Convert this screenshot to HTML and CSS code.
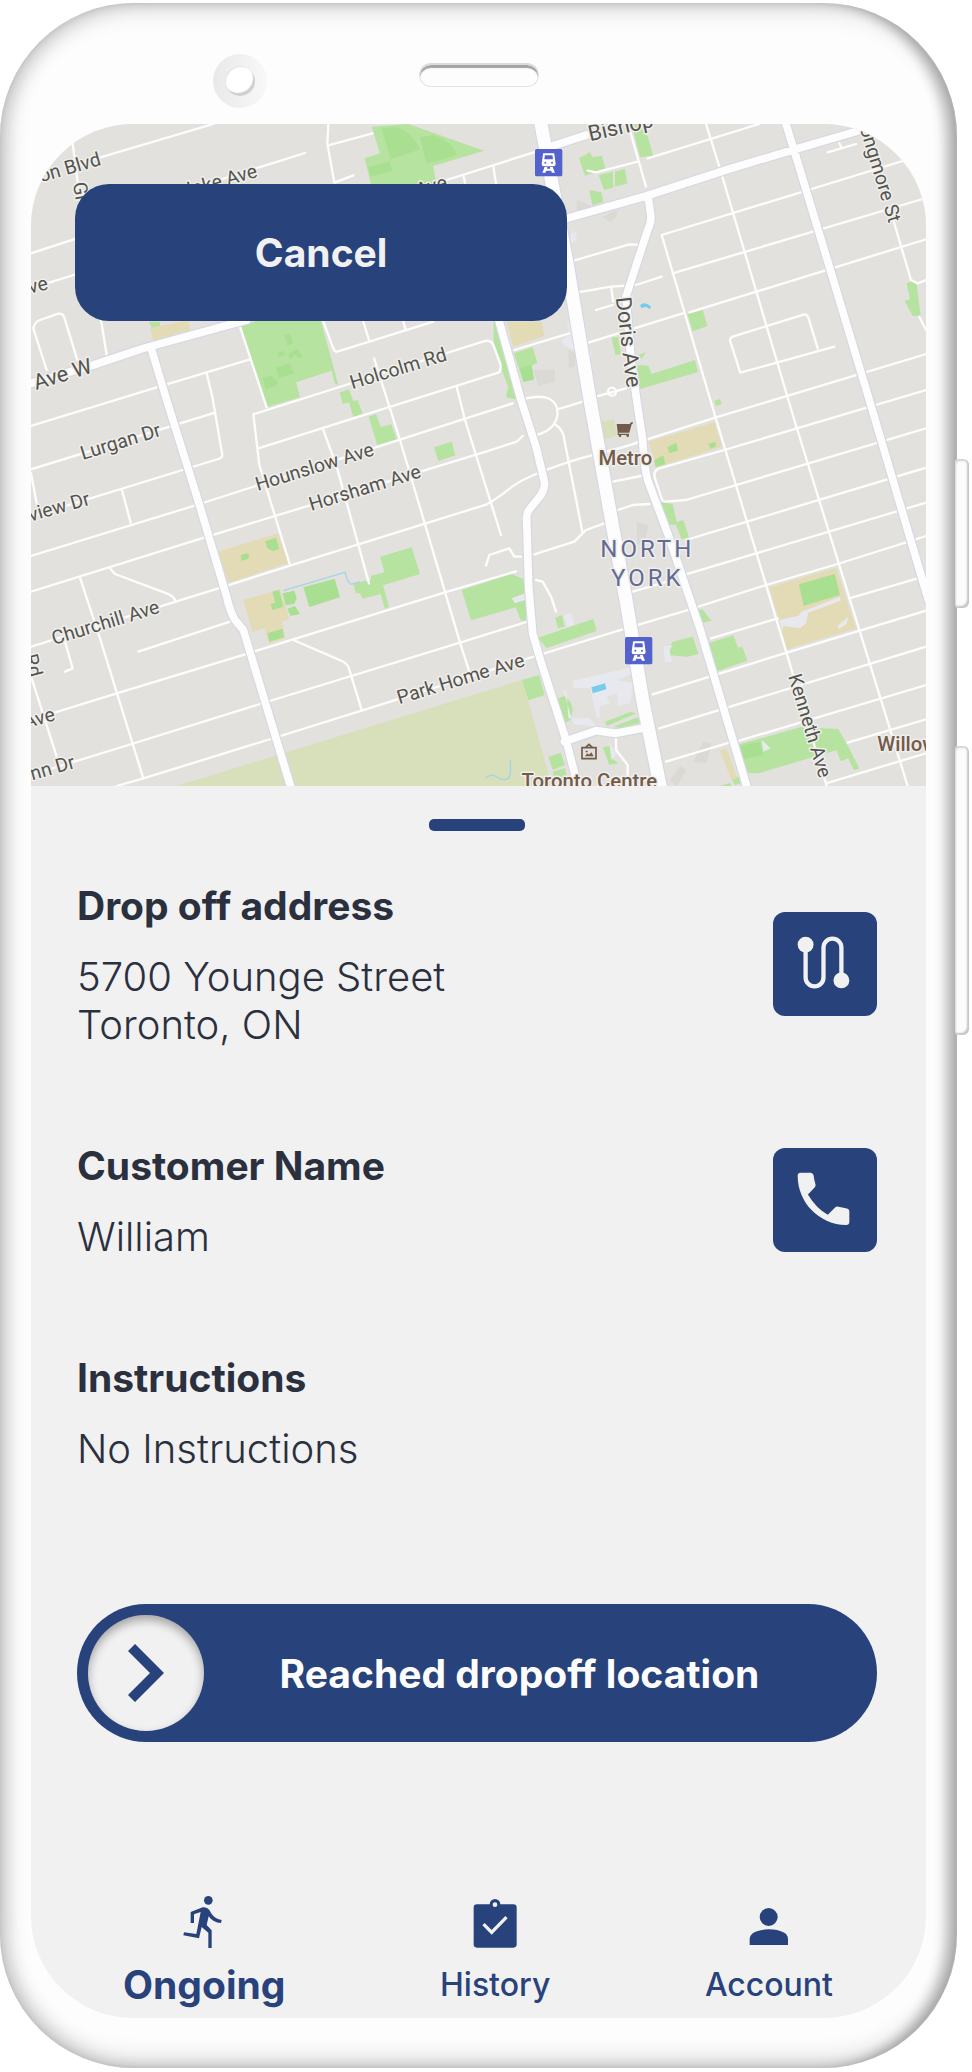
FILE: index.html
```html
<!DOCTYPE html>
<html lang="en">
<head>
<meta charset="utf-8">
<meta name="viewport" content="width=device-width, initial-scale=1">
<title>Drop off</title>
<link rel="stylesheet" href="styles.css">
</head>
<body>
<div class="device">
  <span class="side-key side-key-power"></span>
  <span class="side-key side-key-volume"></span>
  <div class="bezel">
    <span class="camera"><span class="lens"></span></span>
    <span class="speaker"></span>
  </div>
  <main class="screen">
    <section class="map-area">
      <svg class="map" viewBox="93 372 2685 1986" preserveAspectRatio="xMidYMid slice" role="img" aria-label="Map of North York">
        <rect class="land" x="93" y="372" width="2685" height="1986"/>
        <!-- parks and school grounds -->
        <g class="olive">
          <path d="M530 2358L1458 2073L1567 2040L1655 2358Z"/>
          <path d="M1805 1265L1843 1257L1850 1308L1812 1318Z"/>
        </g>
        <g class="park">
          <path d="M1115 380L1225 372L1452 452L1300 498L1310 560L1115 560L1094 475L1140 460Z"/>
          <path d="M722 978L780 960H962L1015 1155L1004 1150L995 1112L888 1147L900 1192L800 1222Z"/>
          <path d="M1019 1178L1047 1168L1060 1203L1073 1200L1088 1241L1060 1250L1047 1207L1028 1212Z"/>
          <path d="M1106 1250L1128 1243L1142 1281L1174 1273L1190 1318L1132 1335Z"/>
          <path d="M1302 1342L1355 1325L1366 1366L1315 1383Z"/>
          <path d="M1141 1670L1235 1642L1260 1722L1149 1756L1167 1820L1155 1826L1142 1782L1088 1796L1080 1780L1068 1780L1059 1750L1113 1740L1113 1728L1153 1717Z"/>
          <path d="M1385 1770L1535 1722L1577 1740L1578 1862L1563 1862L1547 1822L1413 1861Z"/>
          <path d="M448 965H480V977L455 984Z"/>
          <path d="M1737 475L1770 457L1778 472L1805 467L1817 505L1755 527Z"/>
          <path d="M1796 525L1838 515L1840 563L1812 570ZM1845 515L1875 506L1882 550L1845 560Z"/>
          <path d="M1768 570L1804 577L1810 606L1777 616Z"/>
          <path d="M1895 372H1932L1960 467L1920 472Z"/>
          <path d="M2062 942L2108 930L2122 978L2078 994Z"/>
          <path d="M1910 1095L1945 1097L1955 1122L2085 1080L2094 1116L1918 1168Z"/>
          <path d="M1834 1012L1855 1012L1863 1062L1847 1066Z"/>
          <path d="M1906 1068L1938 1057L1925 1076Z"/>
          <path d="M1542 1060L1598 1042L1612 1088L1592 1098L1600 1140L1570 1146Z"/>
          <path d="M1480 965H1500L1547 1198L1518 1192L1525 1160L1482 1050Z"/>
          <path d="M2143 1202L2160 1197L2165 1212L2148 1218Z"/>
          <path d="M2720 850L2735 843L2750 853L2762 948H2738L2714 902L2730 898Z"/>
          <path d="M1978 1505L2018 1512L2030 1567L2050 1560L2067 1612L2045 1618L2028 1574L1998 1575Z"/>
          <path d="M2085 1830L2107 1828L2134 1862L2100 1870Z"/>
          <path d="M2010 1938L2018 1925L2078 1910L2096 1962L2062 1970L2010 1966Z"/>
          <path d="M2125 1930L2200 1906L2214 1943L2227 1940L2242 1982L2152 2013Z"/>
          <path d="M1614 1913L1780 1857L1790 1893L1640 1944ZM1666 1853L1686 1845L1694 1880L1674 1885Z"/>
          <path d="M1566 2040L1617 2025L1634 2085L1585 2101Z"/>
          <path d="M1673 2095L1693 2088Q1715 2100 1718 2130L1712 2160L1692 2170Z"/>
          <path d="M1815 2165L1890 2136L1910 2140L1820 2178ZM1840 2180L1912 2152L1920 2168L1860 2184Z"/>
          <path d="M1808 2242L1828 2238L1835 2275L1855 2290L1828 2295Z"/>
          <path d="M1645 2270L1683 2258L1694 2295L1658 2310ZM1658 2315L1695 2305L1700 2330L1665 2340Z"/>
          <path d="M2210 2235L2400 2182L2470 2205L2512 2188L2555 2288L2578 2305L2562 2310L2545 2275L2522 2283L2510 2250L2275 2320L2240 2318Z"/>
          <path d="M2400 2182L2515 2187L2545 2240L2578 2305L2562 2310L2545 2275L2522 2283L2510 2250L2430 2272Z"/>
          <path d="M2160 2358L2190 2348L2195 2358ZM2195 2338L2215 2330L2222 2350L2205 2355Z"/>
        </g>
        <g class="tan">
          <path d="M450 984L565 960L570 990L460 1022Z"/>
          <path d="M655 1655L834 1600L864 1690L685 1748Z"/>
          <path d="M730 1800L840 1768L868 1858L845 1865L855 1915L808 1930L795 1885L758 1895Z"/>
          <path d="M1520 965H1625L1633 1008L1540 1040Z"/>
          <path d="M1945 1325L2143 1267L2166 1340L1970 1402Z"/>
          <path d="M2308 1762L2508 1703L2568 1885L2362 1948Z"/>
          <path d="M2158 2250L2180 2246L2212 2335L2195 2340Z"/>
        </g>
        <g class="field">
          <path d="M1145 385L1190 380Q1240 400 1260 448L1172 478ZM1260 412L1300 405Q1350 420 1372 465L1280 492ZM1105 500L1168 485L1178 512L1112 530Z"/>
          <path d="M853 1005L870 1000L880 1030L862 1036ZM832 1060L850 1052L856 1065L838 1072ZM865 1065L890 1046L909 1070L895 1074L885 1062L872 1076ZM828 1103L870 1090L882 1120L838 1133ZM788 1135L812 1126L834 1148L825 1160L797 1168Z"/>
          <path d="M795 1624L828 1613L838 1646L820 1654L802 1645ZM723 1666L738 1660L748 1663L745 1676L724 1683Z"/>
          <path d="M817 1775L837 1770L850 1820L817 1830L812 1812L826 1808Z"/>
          <path d="M848 1780L883 1772L890 1795L883 1812L857 1816ZM862 1826L885 1818L900 1842L872 1848ZM910 1762L1004 1736L1020 1792L928 1821ZM802 1900L848 1886L852 1912L808 1925Z"/>
          <path d="M2397 1753L2504 1722L2520 1785L2411 1817ZM1963 1380L1990 1366L1996 1393L1967 1401ZM2002 1342L2030 1328L2033 1352L2008 1360ZM2125 1332L2145 1326L2150 1338L2132 1346ZM2220 2238L2278 2225L2290 2265L2230 2278ZM1560 1105L1595 1095L1602 1138L1570 1145Z"/>
        </g>
        <g class="building">
          <path d="M2338 1860L2395 1848L2405 1835L2520 1790L2522 1802L2425 1838L2418 1870L2400 1885L2350 1878L2347 1892ZM2512 1878L2545 1850L2540 1872L2516 1888Z"/>
          <path d="M1718 2042L1900 2000V2020L1850 2040L1900 2050L1890 2110L1855 2118L1850 2080L1820 2090L1830 2110L1798 2120L1800 2155L1790 2150L1770 2065L1722 2065ZM1690 2070L1700 2072L1705 2155L1770 2155L1790 2180L1720 2172Z"/>
          <path d="M1690 1845L1715 1840L1722 1875L1702 1880ZM1990 1940L2018 1935L2008 1952L2018 1985L1995 1986ZM1535 1795L1575 1780V1800L1545 1810ZM1828 2228L1850 2260L1835 2280ZM1685 1020L1710 1005L1700 960L1730 1000L1775 1060L1770 1115L1740 1060L1690 1035ZM1712 700L1730 695L1728 720L1712 730ZM2285 2220L2312 2245L2290 2255Z"/>
        </g>
        <g class="shade">
          <path d="M1705 1050L1728 1060L1723 1100L1706 1104ZM1600 1110H1665L1665 1145L1615 1158ZM1910 1565L1945 1575L1935 1625L1912 1635ZM2080 2285L2110 2225L2135 2230L2120 2290ZM2010 2340L2040 2298L2060 2310L2030 2358ZM1730 600L1780 620L1730 635ZM1808 650L1850 630L1850 650L1830 665Z"/>
        </g>
        <path class="creek" d="M850 1772L1035 1717L1042 1740L1052 1753L1080 1746M1458 2335Q1470 2320 1485 2328Q1510 2345 1525 2335Q1535 2325 1530 2278"/>
        <path class="water" d="M1774 2062L1815 2050L1819 2068L1778 2080ZM1920 915Q1935 903 1953 920L1950 928L1938 920L1925 925Z"/>
        <!-- local streets -->
        <g class="street">
          <path d="M200 502L640 372M620 552L915 459M985 372L982 430L1003 548L1060 526M985 436L1118 400M218 430L240 600M93 760L240 712M93 865L240 819"/>
          <path d="M140 1110L100 985Q105 965 120 960L175 941Q188 940 192 950L232 1080M303 960L320 1065M93 1278L470 1162L750 1078M620 1120L637 1190L667 1365Q668 1373 655 1377L93 1550M93 1408L645 1238M93 1420L110 1510M365 1467L392 1568"/>
          <path d="M93 1668L580 1518L1538 1210M93 1775L605 1615L1458 1355L1550 1325L1568 1308M93 1940L655 1765L870 1697L1458 1514Q1500 1490 1530 1465T1638 1410T1798 1360T1913 1327L2148 1252L2778 1062"/>
          <path d="M415 1955L690 1865M93 2160L350 2080L735 1963L1335 1777L1548 1714M93 2325L395 2232L780 2112L1380 1928L1588 1863M350 2358L430 2335L812 2217L1085 2132L1568 1980L1868 1888L2058 1832L2298 1755L2513 1692L2778 1608"/>
          <path d="M240 1733L300 1915L430 2335M330 1705L345 1722L500 1780Q520 1788 525 1800M195 1925L218 2005L195 2015M95 2035L170 2270M880 1920L1030 1985Q1042 1992 1045 2000L1085 2130"/>
          <path d="M720 980L800 1222M870 1695L778 1395L760 1243L1458 1022Q1475 1022 1480 1035L1502 1095Q1503 1112 1495 1118L775 1345M970 1290L1010 1400L1107 1750M1122 1075L1200 1320L1380 1928L1407 2012M1370 1160L1395 1260L1503 1605M970 965L1000 1045Q1003 1055 1012 1055L1300 965M1090 965L1107 1020M1210 965L1217 990"/>
          <path d="M1340 540L1608 455M1390 525L1395 548M1480 500L1488 550M1888 385L1938 560M2118 372L2158 500L2383 1260L2723 2358M1943 475L2278 372M1763 512L1788 517L1913 485"/>
          <path d="M1985 705L2148 1257L2378 2020L2480 2358M1985 705L2708 483M2018 820L2768 597M2068 937L2778 718M1758 1030L2048 940M2453 1045L2426 955Q2422 942 2413 943L2198 1010Q2188 1015 2191 1025L2221 1118L2503 1040"/>
          <path d="M2778 1170L2173 1350L1978 1405Q1958 1412 1965 1435L1983 1490Q1985 1505 1998 1505L2058 1500L2778 1285M2778 1403L2058 1620M2778 1508L2058 1723L2038 1680M2753 1735L2548 1795M2778 1832L2363 1957L1958 2083M2133 1915L2333 1855M2778 1940L1978 2185M2778 2055L2208 2225L2123 1930M2778 2158L2543 2228M2778 2260L2478 2350M1998 2285L2208 2222"/>
          <path d="M2680 660L2733 840L2753 850L2778 840M2758 950L2778 990M2483 457L2568 432M2518 430L2523 440M1718 783L1888 733L1918 735M1733 877L1833 860L1908 855L1985 830M1833 860L1840 905M1788 930L1838 915M1543 1050L1708 1000M1578 1195Q1670 1175 1673 1240Q1668 1290 1608 1305M1673 1228L1748 1205M1788 1190L1878 1165M1668 1275Q1690 1290 1693 1320L1748 1600M1838 1445L1923 1428M1853 1530L1898 1515L1948 1512M1603 1663L1723 1625L1758 1590L1813 1570M1458 1697L1468 1665L1528 1645L1543 1670L1563 1670M1608 1740L1628 1745L1653 1790L1668 1835M1898 1775L2018 1740M1848 2200V2250L1883 2295V2358"/>
          <circle cx="1836" cy="1175" r="12"/>
        </g>
        <!-- arterial roads, casing below fill -->
        <g class="casing">
          <path d="M93 1150L280 1095L430 1045L740 960M455 1050L500 1200L600 1520L680 1790Q690 1835 705 1860L730 1890L872 2360M1660 437L1760 405M1690 658L1938 588L2178 510L2378 450L2590 388M2358 372L2388 470L2488 800L2608 1200L2785 1800M1945 595L1953 650Q1953 670 1943 690L1878 890L1893 1080L1910 1200L1928 1320Q1932 1400 1943 1440L2003 1600L2098 1880L2178 2150L2245 2375M1498 965L1563 1200L1608 1340L1632 1440Q1638 1460 1623 1485L1588 1528Q1578 1540 1580 1560L1586 1760L1598 1900L1618 1970L1698 2220L1738 2375M1693 2225L1788 2192L1848 2200L1928 2185"/>
          <path class="wide" d="M1623 372L1658 560L1703 800L1770 1200L1838 1580L1878 1800L1928 2100L1985 2380"/>
        </g>
        <g class="arterial">
          <path d="M93 1150L280 1095L430 1045L740 960M455 1050L500 1200L600 1520L680 1790Q690 1835 705 1860L730 1890L872 2360M1660 437L1760 405M1690 658L1938 588L2178 510L2378 450L2590 388M2358 372L2388 470L2488 800L2608 1200L2785 1800M1945 595L1953 650Q1953 670 1943 690L1878 890L1893 1080L1910 1200L1928 1320Q1932 1400 1943 1440L2003 1600L2098 1880L2178 2150L2245 2375M1498 965L1563 1200L1608 1340L1632 1440Q1638 1460 1623 1485L1588 1528Q1578 1540 1580 1560L1586 1760L1598 1900L1618 1970L1698 2220L1738 2375M1693 2225L1788 2192L1848 2200L1928 2185"/>
          <path class="wide" d="M1623 372L1658 560L1703 800L1770 1200L1838 1580L1878 1800L1928 2100L1985 2380"/>
        </g>
        <!-- street names -->
        <g class="street-name">
          <text transform="translate(123 547) rotate(-16)">on Blvd</text>
          <text transform="translate(775 530) rotate(-16)" text-anchor="end">lake Ave</text>
          <text transform="translate(1345 564) rotate(-16)" text-anchor="end">Ave</text>
          <text transform="translate(147 867) rotate(-14)" text-anchor="end">ve</text>
          <text class="big" transform="translate(280 1117) rotate(-17)" text-anchor="end">n Ave W</text>
          <text transform="translate(218 550) rotate(80)">Gr</text>
          <text transform="translate(1057 1168) rotate(-17)">Holcolm Rd</text>
          <text transform="translate(248 1380) rotate(-17)">Lurgan Dr</text>
          <text transform="translate(273 1513) rotate(-16)" text-anchor="end">view Dr</text>
          <text transform="translate(773 1473) rotate(-17)">Hounslow Ave</text>
          <text transform="translate(934 1533) rotate(-17)">Horsham Ave</text>
          <text transform="translate(162 1935) rotate(-17)">Churchill Ave</text>
          <text transform="translate(168 2160) rotate(-16)" text-anchor="end">Ave</text>
          <text transform="translate(228 2303) rotate(-16)" text-anchor="end">nn Dr</text>
          <text transform="translate(72 1968) rotate(75)">Rd</text>
          <text transform="translate(1198 2113) rotate(-17)">Park Home Ave</text>
          <text class="big" transform="translate(1770 424) rotate(-13)">Bishop</text>
          <text class="big" transform="translate(1847 893) rotate(83)">Doris Ave</text>
          <text transform="translate(2570 355) rotate(73)">Longmore St</text>
          <text transform="translate(2364 2029) rotate(73)">Kenneth Ave</text>
        </g>
        <g class="district">
          <text x="1942" y="1670" text-anchor="middle">NORTH</text>
          <text x="1942" y="1757" text-anchor="middle">YORK</text>
        </g>
        <g class="place">
          <text x="1876" y="1395" text-anchor="middle">Metro</text>
          <text x="1768" y="2363" text-anchor="middle">Toronto Centre</text>
          <text x="2632" y="2253">Willow</text>
        </g>
        <!-- shopping cart -->
        <path class="poi" d="M1850 1272H1889L1893 1267H1899V1270L1895 1273L1888 1298H1856V1301H1887V1305H1853V1296Z"/>
        <circle class="poi" cx="1860" cy="1307" r="4"/><circle class="poi" cx="1883" cy="1307" r="4"/>
        <!-- gallery bag -->
        <path class="poi-line" d="M1746 2243H1788V2276H1746ZM1757 2242L1767 2233L1777 2242"/>
        <path class="poi" d="M1755 2269L1762 2260L1767 2264L1774 2257L1781 2269ZM1757 2252h6v5h-6z"/>
        <!-- subway stations -->
        <g id="station">
          <rect class="station-box" x="1605" y="447" width="82" height="82" rx="5"/>
          <path class="station-line" d="M1632 463H1660L1664 492Q1664 496 1660 496H1632Q1628 496 1628 492Z"/>
          <path class="station-fill" d="M1628 478H1664V497H1628ZM1634 501H1642L1641 506H1651L1650 501H1658L1665 518H1656L1653 512H1639L1636 518H1627Z"/>
          <circle class="station-dot" cx="1636" cy="488" r="3"/><circle class="station-dot" cx="1656" cy="488" r="3"/>
        </g>
        <use href="#station" x="270" y="1464"/>
      </svg>
      <button class="cancel" type="button">Cancel</button>
    </section>

    <section class="sheet">
      <span class="handle"></span>
      <div class="row">
        <div class="info">
          <h2>Drop off address</h2>
          <p>5700 Younge Street<br>Toronto, ON</p>
        </div>
        <button class="action" type="button" aria-label="Show route">
          <svg viewBox="172 230 160 160" aria-hidden="true"><circle cx="198" cy="256" r="24"/><circle cx="306" cy="364" r="24"/><path class="route-line" d="M198 256V355A27 27 0 0 0 252 355V265A27 27 0 0 1 306 265V364"/></svg>
        </button>
      </div>
      <div class="row">
        <div class="info">
          <h2>Customer Name</h2>
          <p>William</p>
        </div>
        <button class="action" type="button" aria-label="Call customer">
          <svg viewBox="172 932 160 160" aria-hidden="true"><path d="M183 934H213Q220 934 222 942Q224 958 228 970Q229 975 225 979L205 1000Q230 1042 265 1061L287 1039Q291 1035 297 1037L323 1042Q330 1044 330 1051V1083Q330 1092 320 1092C240 1090 174 1025 174 943Q174 934 183 934Z"/></svg>
        </button>
      </div>
      <div class="row">
        <div class="info">
          <h2>Instructions</h2>
          <p>No Instructions</p>
        </div>
      </div>
      <button class="slider" type="button">
        <span class="knob"><svg viewBox="0 0 36 58" aria-hidden="true"><path d="M3.500 3.500L29 29L3.500 54.500"/></svg></span>
        <span class="slider-label">Reached dropoff location</span>
      </button>
    </section>

    <nav class="tabs">
      <a class="tab tab-active" href="#ongoing">
        <svg viewBox="536 165 156 156" aria-hidden="true"><circle cx="627" cy="178" r="13"/><path d="M574 213L610 199Q623 197 630 207Q643 235 667 237L665 246Q641 245 628 226L622 252L637 268V321H627V275L607 258L599 292L552 283L554 274L591 279L604 213L584 220V246H574Z"/></svg>
        Ongoing
      </a>
      <a class="tab" href="#history">
        <svg viewBox="1411 165 156 156" aria-hidden="true"><path fill-rule="evenodd" d="M1435 190H1473A16 16 0 0 1 1505 190H1544Q1554 190 1554 200V310Q1554 320 1544 320H1435Q1425 320 1425 310V200Q1425 190 1435 190ZM1489 184A7 7 0 1 0 1489 198A7 7 0 1 0 1489 184ZM1458 246L1479 267L1520 225L1527 232L1479 281L1451 253Z"/></svg>
        History
      </a>
      <a class="tab" href="#account">
        <svg viewBox="771 165 156 156" aria-hidden="true"><circle cx="848" cy="228" r="27"/><path d="M791 312V293Q793 267 848 265Q904 267 906 293V312Z"/></svg>
        Account
      </a>
    </nav>
  </main>
</div>
</body>
</html>
```
FILE: styles.css
```css
* {
  box-sizing: border-box;
}

body {
  margin: 0;
  padding: 3px 15px 5px 0;
  background: #fff;
  color: #2b303e;
  font-family: Inter, "Liberation Sans", sans-serif;
}

button {
  border: 0;
  padding: 0;
  font: inherit;
  cursor: pointer;
}

h2,
p {
  margin: 0;
}

/* Handset */
.device {
  position: relative;
  padding: 0 31px 50px;
  border-radius: 134px;
  background: #fdfdfd;
  box-shadow:
    inset 0 0 2px #c4c4c4,
    inset -8px 0 14px -2px rgba(0, 0, 0, 0.2),
    inset -22px 0 12px -8px rgba(0, 0, 0, 0.12),
    inset 12px 0 20px -4px rgba(0, 0, 0, 0.16),
    inset 0 14px 22px -4px rgba(0, 0, 0, 0.1),
    inset 0 -14px 22px -4px rgba(0, 0, 0, 0.13);
}

.side-key {
  position: absolute;
  left: calc(100% - 2px);
  width: 14px;
  border-radius: 4px 6px 6px 4px;
  background: #fcfcfc;
  box-shadow:
    inset -2px -2px 2px #c4c4c4,
    inset 1px 2px 2px #d4d4d4;
}

.side-key-power {
  top: 456px;
  height: 149px;
}

.side-key-volume {
  top: 743px;
  height: 289px;
}

.bezel {
  display: grid;
  grid-template-columns: 1fr 120px 1fr;
  align-items: start;
  height: 121px;
  padding-top: 51px;
}

.camera {
  display: grid;
  place-items: center;
  justify-self: end;
  width: 54px;
  height: 54px;
  margin-right: 152px;
  border-radius: 50%;
  background: linear-gradient(90deg, #e9e9e9, #f8f8f8);
}

.lens {
  width: 30px;
  height: 30px;
  border-radius: 50%;
  background: #fff;
  box-shadow:
    inset -2px -3px 1px #cfcfcf,
    inset 1px 1px 1px #e2e2e2;
}

.speaker {
  height: 24px;
  margin-top: 9px;
  border: 1px solid #e2e2e2;
  border-top: 2px solid #dcdcdc;
  border-radius: 12px;
  box-shadow: inset 0 3px 1px #a4a4a4;
}

.screen {
  overflow: hidden;
  border-radius: 102px;
  background: #f1f1f1;
}

/* Map */
.map-area {
  position: relative;
}

.map {
  display: block;
  width: 100%;
  height: 662px;
  font-family: Roboto, "Noto Sans", sans-serif;
}

.land { fill: #e2e1dd; }
.olive { fill: #d7dfbb; }
.park { fill: #b6e39f; }
.tan { fill: #e2dbb5; }
.field { fill: #a9df90; }
.building { fill: #e8e9ee; }
.shade { fill: #dad9d4; }
.water { fill: #77ccee; }

.creek {
  fill: none;
  stroke: #a5d4e8;
  stroke-width: 4;
}

.street,
.casing,
.arterial {
  fill: none;
  stroke: #fdfdfd;
  stroke-linecap: round;
  stroke-linejoin: round;
}

.street { stroke-width: 7; }
.casing { stroke: #d6d7e4; stroke-width: 30; }
.casing .wide { stroke-width: 46; }
.arterial { stroke-width: 23; }
.arterial .wide { stroke-width: 39; }

.map text {
  stroke: #f0efec;
  stroke-width: 9;
  stroke-linejoin: round;
  paint-order: stroke;
}

.street-name {
  fill: #54544f;
  font-size: 58px;
}

.street-name .big {
  font-size: 65px;
}

.district {
  fill: #646b93;
  font-size: 72px;
  letter-spacing: 9px;
}

.place {
  fill: #735b4b;
  font-size: 61px;
  font-weight: 500;
}

.poi { fill: #735b4b; }

.poi-line {
  fill: none;
  stroke: #735b4b;
  stroke-width: 5;
}

.station-box { fill: #5562cc; }
.station-fill { fill: #fff; }
.station-dot { fill: #5562cc; }

.station-line {
  fill: none;
  stroke: #fff;
  stroke-width: 6;
}

.cancel {
  position: absolute;
  top: 60px;
  left: 44px;
  width: 55%;
  height: 137px;
  border-radius: 34px;
  background: #28427b;
  color: #f1f1f1;
  font-size: 39px;
  font-weight: 700;
}

/* Delivery details */
.sheet {
  display: flex;
  flex-direction: column;
  gap: 93px;
  padding: 33px 49px 0 46px;
}

.handle {
  align-self: center;
  width: 96px;
  height: 12px;
  margin-bottom: -42px;
  border-radius: 5px;
  background: #28427b;
}

.row {
  display: flex;
  align-items: center;
  justify-content: space-between;
}

.info {
  font-size: 40px;
  line-height: 48px;
}

.info h2 {
  margin-bottom: 23px;
  font-size: 39px;
  font-weight: 700;
}

.info p {
  font-weight: 300;
}

.action {
  display: grid;
  place-items: center;
  width: 104px;
  height: 104px;
  margin-bottom: 3px;
  border-radius: 12px;
  background: #28427b;
}

.action svg {
  width: 53px;
  height: 53px;
  margin: 0 3px 3px 0;
  fill: #f1f1f1;
}

.route-line {
  fill: none;
  stroke: #f1f1f1;
  stroke-width: 13;
}

.slider {
  display: flex;
  align-items: center;
  height: 138px;
  margin-top: 38px;
  padding: 0 42px 0 11px;
  border-radius: 69px;
  background: #28427b;
  color: #fdfdfd;
  font-size: 39px;
  font-weight: 700;
}

.knob {
  display: grid;
  place-items: center;
  width: 116px;
  height: 116px;
  border-radius: 50%;
  background: #f1f1f1;
  box-shadow: inset 0 5px 10px rgba(0, 0, 0, 0.32);
}

.knob svg {
  width: 36px;
  height: 58px;
  fill: none;
  stroke: #28427b;
  stroke-width: 10;
}

.slider-label {
  flex: 1;
}

/* Tab bar */
.tabs {
  display: flex;
  justify-content: space-between;
  padding: 154px 93px 9px 92px;
}

.tab {
  display: flex;
  flex-direction: column;
  align-items: center;
  gap: 13px;
  color: #28427b;
  font-size: 32px;
  font-weight: 500;
  line-height: 48px;
  text-decoration: none;
}

.tab-active {
  font-size: 39px;
  font-weight: 700;
}

.tab svg {
  width: 52px;
  height: 52px;
  fill: currentColor;
}
```
